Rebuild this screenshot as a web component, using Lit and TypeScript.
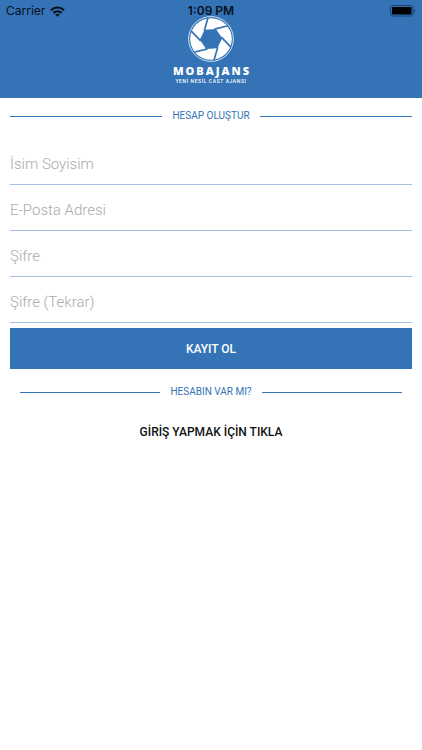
import { LitElement, html, css, svg } from "lit";
import { customElement } from "lit/decorators.js";

const BLADES = [0, 60, 120, 180, 240, 300];

@customElement("section-divider")
class SectionDivider extends LitElement {
  static styles = css`
    :host {
      display: flex;
      align-items: center;
      gap: 10px;
      font-size: 10px;
      line-height: 16px;
      color: #3373b6;
      white-space: nowrap;
    }
    .rule {
      flex: 1;
      height: 1px;
      background: #3373b6;
    }
  `;

  render() {
    return html`<span class="rule"></span><slot></slot><span class="rule"></span>`;
  }
}

@customElement("status-bar")
class StatusBar extends LitElement {
  static styles = css`
    :host {
      display: grid;
      grid-template-columns: 1fr auto 1fr;
      align-items: center;
      height: 22px;
      padding: 0 6px;
      color: #06101c;
      font: 12px/22px Inter, "Liberation Sans", sans-serif;
    }
    .carrier {
      display: flex;
      align-items: center;
      gap: 5px;
    }
    .time {
      font-weight: 600;
    }
    .battery {
      justify-self: end;
    }
    svg {
      display: block;
    }
  `;

  render() {
    return html`
      <span class="carrier">
        Carrier
        <svg width="15" height="11" viewBox="0 0 15 11" fill="none" stroke="#06101c" stroke-width="2.2">
          <path d="M1 4.2C4.6.6 10.4.6 14 4.2M3.4 6.9C5.8 4.7 9.2 4.7 11.6 6.9" />
          <path d="M7.5 10.8 5.2 8.5C6.5 7.4 8.5 7.4 9.8 8.5Z" fill="#06101c" stroke="none" />
        </svg>
      </span>
      <span class="time">1:09 PM</span>
      <svg class="battery" width="26" height="12" viewBox="0 0 26 12">
        <rect x=".5" y=".5" width="22.5" height="10.5" rx="2.5" fill="none" stroke="#1b4270" />
        <rect x="2" y="2" width="19.5" height="7.5" rx="1" fill="#000" />
        <path d="M24.2 4C25.6 4.4 25.6 7.4 24.2 7.8Z" fill="#1b4270" />
      </svg>
    `;
  }
}

@customElement("app-root")
class AppRoot extends LitElement {
  static styles = css`
    :host {
      display: block;
      min-height: 100vh;
      background: #fff;
      font-family: Roboto, "Noto Sans", sans-serif;
    }
    * {
      box-sizing: border-box;
    }
    header {
      background: #3373b6;
      padding-bottom: 14px;
    }
    .brand {
      display: flex;
      flex-direction: column;
      align-items: center;
      color: #fff;
      margin-top: -7px;
    }
    .mark {
      display: block;
      width: 48px;
      height: 48px;
    }
    .name {
      font: 800 11px/14px "Open Sans", sans-serif;
      letter-spacing: 2px;
      margin: 1px 0 0 2px;
    }
    .tagline {
      font-size: 5px;
      line-height: 6px;
      font-weight: 500;
      letter-spacing: 0.6px;
    }
    main {
      padding: 10px;
    }
    form {
      padding-top: 15px;
    }
    input {
      display: block;
      width: 100%;
      height: 46px;
      padding: 5px 0 0;
      border: 0;
      border-bottom: 1px solid #a5c3e6;
      border-radius: 0;
      background: none;
      color: #222;
      font: 300 15px/20px Roboto, sans-serif;
      outline: none;
    }
    input::placeholder {
      color: #aaa;
      opacity: 1;
    }
    button {
      display: block;
      width: 100%;
      height: 41px;
      margin-top: 5px;
      border: 0;
      background: #3373b6;
      color: #fff;
      font: 500 12px/20px Roboto, sans-serif;
    }
    .existing {
      padding: 15px 10px;
    }
    .login {
      display: block;
      margin-top: 22px;
      text-align: center;
      color: #111;
      text-decoration: none;
      font-size: 12px;
      line-height: 20px;
      font-weight: 500;
    }
  `;

  render() {
    return html`
      <header>
        <status-bar></status-bar>
        <div class="brand">
          <svg class="mark" viewBox="-24 -24 48 48" aria-hidden="true">
            <circle r="22.4" fill="none" stroke="#fff" stroke-width=".8" />
            <circle r="20.8" fill="#fff" />
            <path d="M-6.3-9.3 4.9-10.1 11.2-.8 6.3 9.3-4.9 10.1-11.2.8Z" fill="#3373b6" />
            ${BLADES.map(
              (a) => svg`<path transform="rotate(${a})" d="M-6.8-8-3-21.3" stroke="#3373b6" stroke-width="1.7" />`,
            )}
          </svg>
          <div class="name">MOBAJANS</div>
          <div class="tagline">YENİ NESİL CAST AJANSI</div>
        </div>
      </header>
      <main>
        <section-divider>HESAP OLUŞTUR</section-divider>
        <form>
          <input type="text" placeholder="İsim Soyisim" aria-label="İsim Soyisim" />
          <input type="email" placeholder="E-Posta Adresi" aria-label="E-Posta Adresi" />
          <input type="password" placeholder="Şifre" aria-label="Şifre" />
          <input type="password" placeholder="Şifre (Tekrar)" aria-label="Şifre (Tekrar)" />
          <button type="button">KAYIT OL</button>
        </form>
        <div class="existing">
          <section-divider>HESABIN VAR MI?</section-divider>
          <a class="login" href="#giris">GİRİŞ YAPMAK İÇİN TIKLA</a>
        </div>
      </main>
    `;
  }
}
